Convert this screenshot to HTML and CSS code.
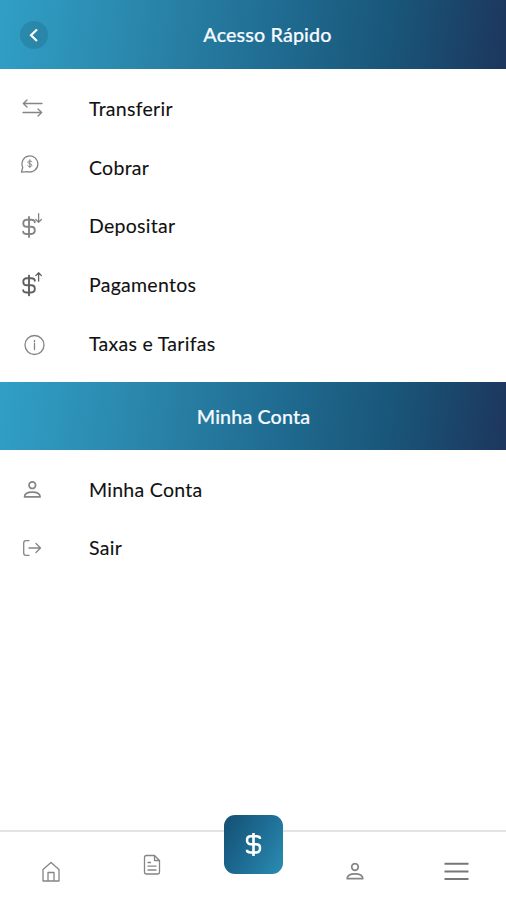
FILE: index.html
```html
<!DOCTYPE html>
<html lang="pt-BR">
<head>
<meta charset="utf-8">
<title>Acesso Rápido</title>
<link rel="stylesheet" href="styles.css">
</head>
<body>
<svg class="defs" width="0" height="0" aria-hidden="true">
  <symbol id="dollar" viewBox="0 0 14 22"><path d="M7 1v20M12.800 6.200C12.800 4.600 11.300 3.800 9.500 3.800H4.800C2.500 3.800 1.300 5.200 1.300 7.200S2.700 10.800 4.800 10.800H9.200C11.500 10.800 12.800 12.200 12.800 14.300S11.400 18 9.200 18H4.500C2.600 18 1.200 17.200 1.200 15.700"/></symbol>
  <symbol id="person" viewBox="0 0 18 18"><circle cx="9" cy="4.500" r="3.300"/><path d="M1.200 16.200C1.200 12.900 4.200 11.400 9 11.400S16.800 12.900 16.800 16.200Z"/></symbol>
</svg>
<div class="screen">
  <header class="bar bar-top">
    <button class="back" aria-label="Voltar"><svg width="28" height="28"><path d="M17 8.500 11 14.300l6 5.700"/></svg></button>
    <h1 class="title title-top">Acesso Rápido</h1>
  </header>
  <ul class="list">
    <li class="row"><svg class="icon" width="44" height="40"><path d="M32 14.500H13.300M17 11l-3.700 3.500L17 18M13 23.500h18.700M28 20l3.700 3.500L28 27"/></svg><span class="label">Transferir</span></li>
    <li class="row"><svg class="icon" width="44" height="40"><path d="M11.500 24.200 12.700 19.500A8 8 0 1 1 17.500 23.600Z"/><path class="fine" d="M22 13.700c-.5-1-4.200-1.200-4.200.5s4.200 1.200 4.200 3-4 1.600-4.400.4M19.800 11.700v8"/></svg><span class="label">Cobrar</span></li>
    <li class="row"><svg class="icon" width="44" height="40"><use class="money" href="#dollar" x="12" y="10" width="14" height="22"/><path d="M28.600 7.600v8.500M25.800 13.500l2.800 2.800 2.800-2.800"/></svg><span class="label">Depositar</span></li>
    <li class="row"><svg class="icon dark" width="44" height="40"><use class="money" href="#dollar" x="12" y="9.500" width="14" height="22"/><path d="M28.600 16V7.800M25.800 10.600l2.800-2.800 2.800 2.800"/></svg><span class="label">Pagamentos</span></li>
    <li class="row"><svg class="icon" width="44" height="40"><circle cx="24.500" cy="21" r="9.500"/><path d="M24.500 19.500v6M24.500 16.500v1.300"/></svg><span class="label">Taxas e Tarifas</span></li>
  </ul>
  <section class="bar"><h2 class="title title-mid">Minha Conta</h2></section>
  <ul class="list">
    <li class="row"><svg class="icon person" width="44" height="40"><use href="#person" x="13.300" y="10.700" width="18" height="18"/></svg><span class="label">Minha Conta</span></li>
    <li class="row"><svg class="icon" width="44" height="40"><path d="M19 12.600h-3q-2.300 0-2.300 2.300v10.200q0 2.300 2.300 2.300h3M19 20h11.500M26 15.500l4.500 4.500-4.500 4.500"/></svg><span class="label">Sair</span></li>
  </ul>
  <nav class="nav">
    <a class="tab"><svg class="icon" width="40" height="40"><path d="M12 30V18.500L20 11.500l8 7V30ZM17 30v-8.500h6V30M17 21.500h6"/></svg></a>
    <a class="tab tab-doc"><svg class="icon" width="40" height="40"><path d="M22.500 11.500H14.500q-2 0-2 2v14.500q0 2 2 2h11q2 0 2-2V16.500ZM22.500 11.500v5h5M16 18.500h2.500M16 22.200h8M16 26h8"/></svg></a>
    <a class="tab"><span class="pay"><svg width="59" height="59"><use href="#dollar" x="21.500" y="16.500" width="16" height="26"/></svg></span></a>
    <a class="tab"><svg class="icon person" width="40" height="40"><use href="#person" x="12" y="11.500" width="18" height="18"/></svg></a>
    <a class="tab"><svg class="icon menu" width="40" height="40"><path d="M9.500 12.800h24M9.500 20.500h24M9.500 28h24"/></svg></a>
  </nav>
</div>
</body>
</html>
```

FILE: styles.css
```css
* { box-sizing: border-box; }
body { margin: 0; background: #fff; font-family: Lato, "Liberation Sans", sans-serif; }
.defs { display: block; height: 0; }
.screen { display: flex; flex-direction: column; width: 506px; height: 900px; overflow: hidden; }
.bar { display: flex; align-items: center; justify-content: center; flex: none; height: 68px; position: relative;
  background: linear-gradient(98deg, #309fc6 0%, #2b88ad 26%, #216e94 52%, #19577a 76%, #1d365d 100%); }
.bar-top { height: 69px; }
.back { position: absolute; left: 20px; top: 21px; width: 28px; height: 28px; padding: 0; border: 0; border-radius: 50%; background: rgba(35, 110, 140, .4); }
.back svg { display: block; fill: none; stroke: #fff; stroke-width: 2.2; }
.title { margin: 0; font-size: 19.700px; font-weight: 500; line-height: 28px; color: #f5fbff; white-space: nowrap; letter-spacing: .15px; -webkit-text-stroke: .2px #f5fbff; }
.title-top { padding: 1px 0 0 29px; }
.title-mid { padding: 3px 0 0 1px; }
.list { margin: 0; padding: 10.500px 0 9px 10px; list-style: none; flex: none; }
.row { display: flex; align-items: center; height: 58.700px; }
.icon { flex: none; fill: none; stroke: #858585; stroke-width: 1.3; stroke-linecap: round; stroke-linejoin: round; }
.money { stroke-width: 1.900; }
.dark { stroke: #606060; }
.fine { stroke-width: 1; }
.person { stroke-width: 1.700; }
.label { margin-left: 35px; font-size: 19.500px; line-height: 28px; color: #111; white-space: nowrap; letter-spacing: .28px; -webkit-text-stroke: .1px #111; }
.nav { display: flex; align-items: center; flex: none; height: 70px; margin-top: auto; border-top: 2px solid #e4e4e4; padding-top: 10px; }
.tab { display: flex; justify-content: center; flex: 1; height: 40px; position: relative; }
.tab-doc { top: -7px; }
.pay { position: absolute; left: 21.500px; top: -36px; width: 59px; height: 59px; border-radius: 11px; background: linear-gradient(120deg, #154f73 0%, #1d6b92 48%, #2b8cb3 100%); }
.pay svg { display: block; fill: none; stroke: #fff; stroke-width: 2.300; }
.menu { stroke: #777; stroke-width: 1.900; stroke-linecap: butt; }
```
